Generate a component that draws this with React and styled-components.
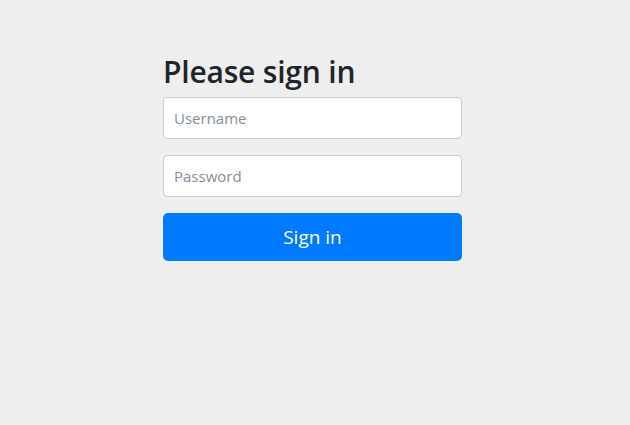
import React from "react";
import styled, { createGlobalStyle } from "styled-components";

const Global = createGlobalStyle`
  html, body { margin: 0; padding: 0; background: #eee; }
  body { font-family: "Open Sans", "Noto Sans", sans-serif; color: #212529; }
  * { box-sizing: border-box; }
`;

const Page = styled.div`
  display: flex;
  justify-content: center;
  padding: 52px 5px 40px 0;
  min-height: 425px;
`;

const Form = styled.form`
  width: 299px;
  display: flex;
  flex-direction: column;
`;

const Heading = styled.h2`
  margin: 0 0 6px;
  font-size: 30px;
  font-weight: 600;
  line-height: 39px;
  color: #212529;
  letter-spacing: -0.2px;
`;

const Input = styled.input`
  height: 42px;
  width: 100%;
  padding: 0 10px;
  margin-bottom: ${(p) => p.$mb}px;
  font-family: inherit;
  font-size: 15px;
  color: #495057;
  background: #fff;
  border: 1px solid #ccc;
  border-radius: 4px;
  outline: none;
  &::placeholder { color: #868e96; }
`;

const Button = styled.button`
  height: 48px;
  width: 100%;
  border: none;
  border-radius: 5px;
  background: #007bff;
  color: #fff;
  font-family: inherit;
  font-size: 19px;
  cursor: pointer;
`;

export default function App() {
  return (
    <>
      <Global />
      <Page>
        <Form onSubmit={(e) => e.preventDefault()}>
          <Heading>Please sign in</Heading>
          <Input type="text" placeholder="Username" $mb={16} />
          <Input type="password" placeholder="Password" $mb={16} />
          <Button type="submit">Sign in</Button>
        </Form>
      </Page>
    </>
  );
}
